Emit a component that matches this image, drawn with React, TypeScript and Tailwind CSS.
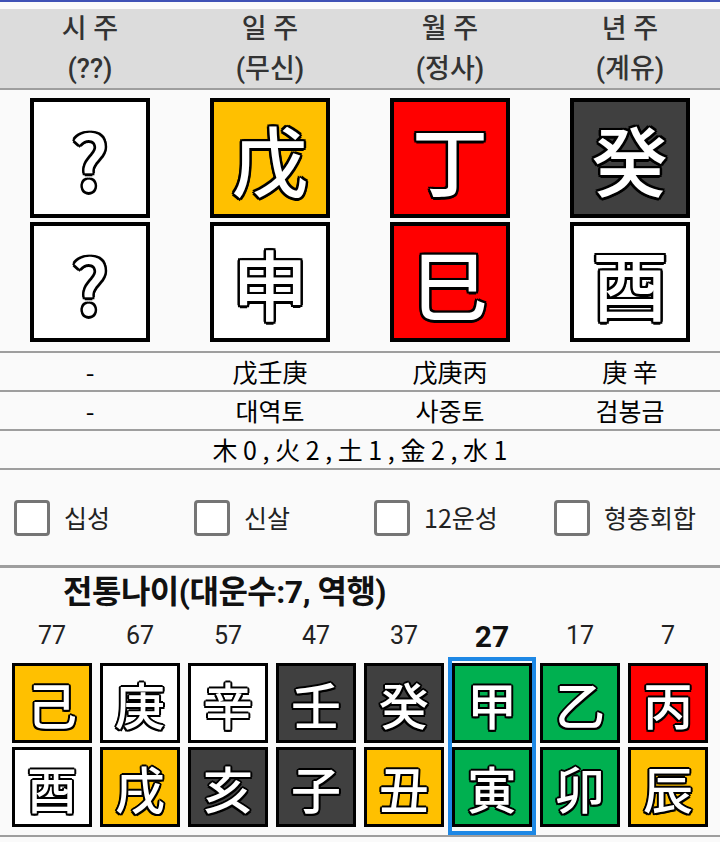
import React from "react";

const FONT = "font-['Roboto','Noto_Sans_CJK_KR',sans-serif]";
const CJK = "font-['Noto_Sans_CJK_KR','Noto_Sans_CJK_SC',sans-serif]";

const BIG_SHADOW =
  "[text-shadow:0_0_3px_#000,2.5px_0_0_#000,-2.5px_0_0_#000,0_2.5px_0_#000,0_-2.5px_0_#000,2px_2px_0_#000,-2px_-2px_0_#000,2px_-2px_0_#000,-2px_2px_0_#000]";
const SMALL_SHADOW =
  "[text-shadow:0_0_2px_#000,2px_0_0_#000,-2px_0_0_#000,0_2px_0_#000,0_-2px_0_#000,1.5px_1.5px_0_#000,-1.5px_-1.5px_0_#000,1.5px_-1.5px_0_#000,-1.5px_1.5px_0_#000]";

type C = "y" | "r" | "d" | "w" | "g";
const BG: Record<C, string> = {
  y: "bg-[#ffc000]",
  r: "bg-[#ff0000]",
  d: "bg-[#404040]",
  w: "bg-white",
  g: "bg-[#00b050]",
};

const headers = [
  ["시 주", "(??)"],
  ["일 주", "(무신)"],
  ["월 주", "(정사)"],
  ["년 주", "(계유)"],
];

const pillars: [string, C, string, C][] = [
  ["?", "w", "?", "w"],
  ["戊", "y", "申", "w"],
  ["丁", "r", "巳", "r"],
  ["癸", "d", "酉", "w"],
];

const daewoon: { age: string; top: string; tc: C; bot: string; bc: C; sel?: boolean }[] = [
  { age: "77", top: "己", tc: "y", bot: "酉", bc: "w" },
  { age: "67", top: "庚", tc: "w", bot: "戌", bc: "y" },
  { age: "57", top: "辛", tc: "w", bot: "亥", bc: "d" },
  { age: "47", top: "壬", tc: "d", bot: "子", bc: "d" },
  { age: "37", top: "癸", tc: "d", bot: "丑", bc: "y" },
  { age: "27", top: "甲", tc: "g", bot: "寅", bc: "g", sel: true },
  { age: "17", top: "乙", tc: "g", bot: "卯", bc: "g" },
  { age: "7", top: "丙", tc: "r", bot: "辰", bc: "y" },
];

function BigCard({ ch, c }: { ch: string; c: C }) {
  return (
    <div
      className={`w-[120px] h-[120px] border-[4px] border-black ${BG[c]} flex items-center justify-center`}
    >
      <span
        className={`${CJK} text-white text-[76px] leading-none font-medium ${BIG_SHADOW}`}
      >
        {ch}
      </span>
    </div>
  );
}

function SmallCard({ ch, c }: { ch: string; c: C }) {
  return (
    <div
      className={`w-[80px] h-[80px] border-[3px] border-black ${BG[c]} flex items-center justify-center`}
    >
      <span
        className={`${CJK} text-white text-[50px] leading-none font-medium ${SMALL_SHADOW}`}
      >
        {ch}
      </span>
    </div>
  );
}

function Checkbox({ label }: { label: string }) {
  return (
    <div className="flex items-center pl-[14px]">
      <div className="w-[36px] h-[36px] border-[3px] border-[#757575] rounded-[4px] bg-white" />
      <span className={`${CJK} ml-[14px] text-[25px] text-[#222] leading-none`}>{label}</span>
    </div>
  );
}

export default function App() {
  return (
    <div className={`w-[720px] h-[842px] bg-[#fafafa] overflow-hidden ${FONT}`}>
      <div className="h-[2px] bg-[#3f51b5]" />
      <div className="h-[7px]" />
      {/* header */}
      <div className="grid grid-cols-4 h-[81px] bg-[#dcdcdc] border-b-2 border-[#9e9e9e]">
        {headers.map(([a, b]) => (
          <div key={a} className="flex flex-col items-center justify-center text-[#333] text-[27px] leading-[40px] font-medium">
            <span>{a}</span>
            <span>{b}</span>
          </div>
        ))}
      </div>
      {/* pillars */}
      <div className="grid grid-cols-4 pt-[8px] pb-[9px] bg-[#fafafa] border-b-2 border-[#9e9e9e]">
        {pillars.map(([t, tc, b, bc], i) => (
          <div key={i} className="flex flex-col items-center gap-[4px]">
            <BigCard ch={t} c={tc} />
            <BigCard ch={b} c={bc} />
          </div>
        ))}
      </div>
      {/* rows */}
      <div className={`grid grid-cols-4 h-[39px] items-center border-b-2 border-[#9e9e9e] text-[25px] text-black ${CJK}`}>
        {["-", "戊壬庚", "戊庚丙", "庚 辛"].map((s, i) => (
          <div key={i} className="text-center leading-none">{s}</div>
        ))}
      </div>
      <div className={`grid grid-cols-4 h-[39px] items-center border-b-2 border-[#9e9e9e] text-[25px] text-black ${CJK}`}>
        {["-", "대역토", "사중토", "검봉금"].map((s, i) => (
          <div key={i} className="text-center leading-none">{s}</div>
        ))}
      </div>
      <div className={`flex h-[39px] items-center justify-center border-b-2 border-[#9e9e9e] text-[25px] text-black ${CJK}`}>
        <span className="leading-none">木 0 , 火 2 , 土 1 , 金 2 , 水 1</span>
      </div>
      {/* checkboxes */}
      <div className="grid grid-cols-4 h-[98px] items-center border-b-[3px] border-[#9e9e9e]">
        <Checkbox label="십성" />
        <Checkbox label="신살" />
        <Checkbox label="12운성" />
        <Checkbox label="형충회합" />
      </div>
      {/* daewoon */}
      <div className="h-[47px] flex items-center pl-[63px] text-[32px] font-bold text-[#111] tracking-[-0.5px]">
        전통나이(대운수:7, 역행)
      </div>
      <div className="flex px-[8px] h-[42px] items-center">
        {daewoon.map((d) => (
          <div
            key={d.age}
            className={`w-[88px] text-center ${d.sel ? "font-bold text-[30px] text-[#111]" : "text-[25px] text-[#222]"}`}
          >
            {d.age}
          </div>
        ))}
      </div>
      <div className="flex px-[8px] border-b-2 border-[#9e9e9e]">
        {daewoon.map((d) => (
          <div
            key={d.age}
            className={`w-[88px] border-[4px] ${d.sel ? "border-[#1e88e5]" : "border-transparent"} pt-[2px] pb-[4px] flex flex-col gap-[4px]`}
          >
            <SmallCard ch={d.top} c={d.tc} />
            <SmallCard ch={d.bot} c={d.bc} />
          </div>
        ))}
      </div>
    </div>
  );
}
